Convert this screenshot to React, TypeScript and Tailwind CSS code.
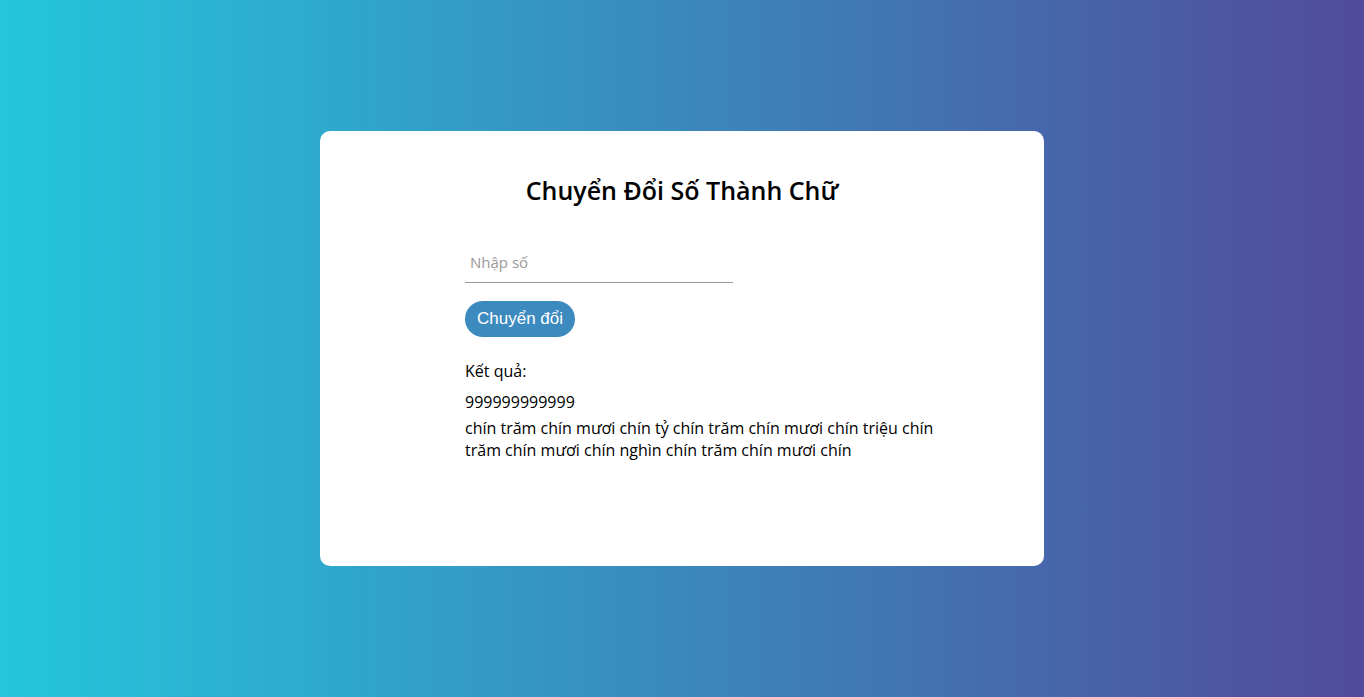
import { useState } from 'react';

const App = () => {
  const [value, setValue] = useState('');

  return (
    <div
      className="flex min-h-screen items-center justify-center bg-[linear-gradient(to_right,#24c6dc,#514a9d)]"
      style={{ fontFamily: '"Open Sans", "Noto Sans", sans-serif' }}
    >
      <div className="h-[435px] w-[724px] rounded-[10px] bg-white pt-[39px]">
        <h1 className="text-center text-[25px] font-semibold leading-[40px] text-black">Chuyển Đổi Số Thành Chữ</h1>

        <div className="ml-[145px] mt-[32px] w-[490px]">
          <input
            type="text"
            value={value}
            onChange={(e) => setValue(e.target.value)}
            placeholder="Nhập số"
            className="block h-[41px] w-[268px] border-b border-[#999] px-[5px] text-[15px] text-black outline-none placeholder:text-[#999]"
          />

          <button
            className="mt-[18px] h-[36px] rounded-full bg-[#3d8abf] px-[12px] text-[17px] text-white"
            style={{ fontFamily: '"Liberation Sans", Arial, sans-serif' }}
          >
            Chuyển đổi
          </button>

          <div className="mt-[23px] text-[16px] leading-[22px] text-black">
            <p>Kết quả:</p>
            <p className="mt-[9px]">999999999999</p>
            <p className="mt-[4px]">
              chín trăm chín mươi chín tỷ chín trăm chín mươi chín triệu chín trăm chín mươi chín nghìn chín trăm chín
              mươi chín
            </p>
          </div>
        </div>
      </div>
    </div>
  );
};

export default App;
